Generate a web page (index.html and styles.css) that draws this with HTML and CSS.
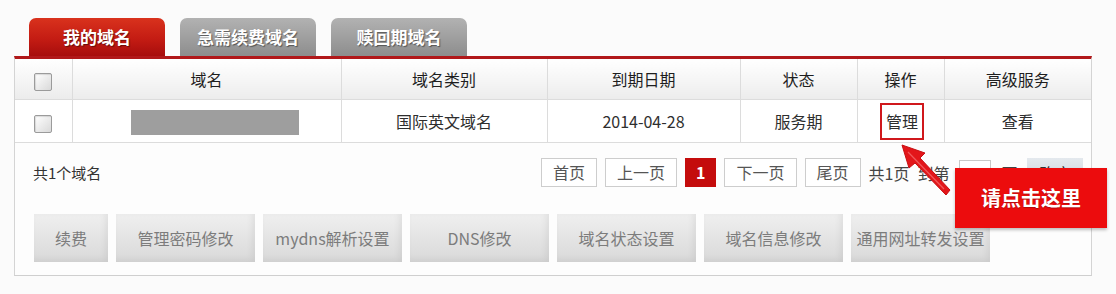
FILE: index.html
```html
<!DOCTYPE html>
<html>
<head>
  <meta charset="utf-8">
  <title>我的域名</title>
  <link rel="stylesheet" href="styles.css">
</head>
<body>
  <div class="page">
    <div class="tabs">
      <div class="tab active">我的域名</div>
      <div class="tab">急需续费域名</div>
      <div class="tab">赎回期域名</div>
    </div>
    <div class="panel">
      <table class="list">
        <colgroup>
          <col style="width:57px">
          <col style="width:269px">
          <col style="width:206px">
          <col style="width:193px">
          <col style="width:117px">
          <col style="width:87px">
          <col>
        </colgroup>
        <thead>
          <tr>
            <th><span class="checkbox"></span></th>
            <th>域名</th>
            <th>域名类别</th>
            <th>到期日期</th>
            <th>状态</th>
            <th>操作</th>
            <th>高级服务</th>
          </tr>
        </thead>
        <tbody>
          <tr>
            <td><span class="checkbox"></span></td>
            <td class="domain"><span class="masked"></span></td>
            <td>国际英文域名</td>
            <td>2014-04-28</td>
            <td>服务期</td>
            <td><span class="manage">管理</span></td>
            <td>查看</td>
          </tr>
        </tbody>
      </table>

      <div class="pager-row">
        <span class="count">共1个域名</span>
        <div class="pager">
          <span class="page-btn">首页</span>
          <span class="page-btn">上一页</span>
          <span class="page-btn current">1</span>
          <span class="page-btn">下一页</span>
          <span class="page-btn">尾页</span>
          <span class="page-info">共1页</span>
          <span class="page-info">到第</span>
          <span class="page-input"></span>
          <span class="page-info">页</span>
          <span class="go-btn">确定</span>
        </div>
      </div>

      <div class="actions">
        <button class="action short">续费</button>
        <button class="action">管理密码修改</button>
        <button class="action">mydns解析设置</button>
        <button class="action">DNS修改</button>
        <button class="action">域名状态设置</button>
        <button class="action">域名信息修改</button>
        <button class="action">通用网址转发设置</button>
      </div>
    </div>

    <!-- annotation drawn over the page -->
    <svg class="arrow" width="1116" height="294" viewBox="0 0 1116 294">
      <polygon points="902,145 925,153 920,158 950,190 946,195 915,163 909,168"
               fill="#e3161a" stroke="#c80f12" stroke-width="1" stroke-linejoin="round"/>
      <line x1="908" y1="152" x2="944" y2="189" stroke="#f05a5c" stroke-width="1.2"/>
    </svg>
    <div class="callout">请点击这里</div>
  </div>
</body>
</html>
```

FILE: styles.css
```css
body {
  margin: 0;
  padding: 0;
  background-color: #fbfbfb;
  font-family: "Noto Sans CJK SC", "Noto Sans", sans-serif;
  color: #333;
}

.page {
  position: relative;
  width: 1116px;
  height: 294px;
  padding: 18px 0 0 14px;
  box-sizing: border-box;
}

.tabs {
  display: flex;
  gap: 15px;
  padding-left: 15px;
  height: 38px;
}

.tab {
  width: 136px;
  height: 38px;
  line-height: 38px;
  text-align: center;
  font-size: 17px;
  font-weight: bold;
  color: #fff;
  text-shadow: 1px 1px 1px rgba(0, 0, 0, 0.45);
  border-radius: 7px 7px 0 0;
  background: linear-gradient(to bottom, #b2b2b2, #8d8d8d);
}

.tab.active {
  background: linear-gradient(to bottom, #d9321d 0%, #c41c13 55%, #a70d0d 100%);
}

.panel {
  width: 1078px;
  box-sizing: border-box;
  border-top: 3px solid #b1181a;
  border-left: 1px solid #d4d4d4;
  border-right: 1px solid #d4d4d4;
  border-bottom: 1px solid #cfcfcf;
  background-color: #fdfdfd;
  padding-bottom: 13px;
}

.list {
  width: 100%;
  table-layout: fixed;
  border-collapse: collapse;
  font-size: 16px;
  text-align: center;
}

.list th,
.list td {
  border: 1px solid #dcdcdc;
  padding: 0;
}

.list th:first-child,
.list td:first-child {
  border-left: none;
}

.list th:last-child,
.list td:last-child {
  border-right: none;
}

.list th {
  border-top: none;
  height: 40px;
  font-weight: normal;
  color: #1e1e1e;
  background: linear-gradient(to bottom, #ffffff, #ececec);
}

.list td {
  height: 42px;
  color: #2e2e2e;
  background-color: #fff;
}

.checkbox {
  display: inline-block;
  width: 16px;
  height: 16px;
  vertical-align: middle;
  border: 1px solid #9b9b9b;
  border-radius: 2px;
  background: linear-gradient(135deg, #ffffff, #d9d9d9);
  box-shadow: inset 1px 1px 1px rgba(0, 0, 0, 0.12);
}

.list td.domain {
  padding-left: 16px;
}

.masked {
  display: inline-block;
  width: 168px;
  height: 25px;
  vertical-align: middle;
  background-color: #9e9e9e;
}

.manage {
  display: inline-block;
  padding: 4px 4px;
  line-height: 25px;
  border: 2px solid #d0181c;
  margin-left: 3px;
}

.pager-row {
  display: flex;
  align-items: center;
  padding: 15px 0 0 18px;
  height: 29px;
}

.count {
  width: 508px;
  font-size: 15px;
  color: #333;
}

.pager {
  display: flex;
  align-items: center;
  gap: 8px;
  font-size: 16px;
}

.page-btn {
  height: 27px;
  line-height: 27px;
  padding: 0 11px;
  border: 1px solid #cdcdcd;
  background-color: #fff;
  color: #555;
}

.page-btn.current {
  padding: 0 10px;
  border-color: #c40c0c;
  background-color: #c40c0c;
  color: #fff;
  font-weight: bold;
}

.page-info {
  color: #444;
}

.page-input {
  width: 30px;
  height: 24px;
  border: 1px solid #c8c8c8;
  background-color: #fff;
  margin: 0 2px;
}

.go-btn {
  width: 56px;
  height: 30px;
  line-height: 30px;
  text-align: center;
  background: linear-gradient(to bottom, #e4e9ee, #c9d2da);
  color: #333;
  margin-left: 2px;
}

.actions {
  display: flex;
  gap: 8px;
  padding-left: 19px;
  margin-top: 27px;
}

.action {
  width: 139px;
  height: 48px;
  padding: 0;
  border: none;
  white-space: nowrap;
  font-family: "Noto Sans CJK SC", "Noto Sans", sans-serif;
  font-size: 16px;
  color: #7c7c7c;
  background: linear-gradient(to bottom, #efefef, #d9d9d9);
  box-shadow: inset -3px -2px 6px rgba(0, 0, 0, 0.06);
}

.action.short {
  width: 74px;
}

.arrow {
  position: absolute;
  left: 0;
  top: 0;
  pointer-events: none;
}

.callout {
  position: absolute;
  left: 955px;
  top: 168px;
  width: 152px;
  height: 60px;
  line-height: 60px;
  text-align: center;
  background-color: #ec0c0d;
  color: #fff;
  font-size: 20px;
  font-weight: bold;
  text-shadow: 0 1px 1px rgba(0, 0, 0, 0.25);
  box-shadow: 0 2px 3px rgba(0, 0, 0, 0.25);
}
```
